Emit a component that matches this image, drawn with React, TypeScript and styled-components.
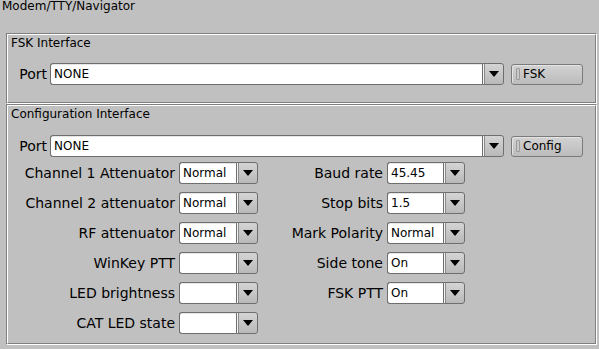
import React from 'react'
import styled, { createGlobalStyle } from 'styled-components'

const GlobalStyle = createGlobalStyle`
  html, body {
    margin: 0;
    padding: 0;
    background: #c0c0c0;
  }
  body {
    font-family: 'DejaVu Sans', 'Liberation Sans', sans-serif;
    color: #000;
  }
`

const Page = styled.div`
  width: 599px;
  height: 349px;
  box-sizing: border-box;
  padding: 0 2px 0 6px;
  background: #c0c0c0;
  overflow: hidden;
`

const Title = styled.div`
  font-size: 12px;
  line-height: 12px;
  height: 12px;
  margin-left: -4px;
`

const Group = styled.div<{ $top: number; $height: number }>`
  margin-top: ${p => p.$top}px;
  width: 591px;
  height: ${p => p.$height}px;
  box-sizing: border-box;
  border: 1px solid;
  border-color: #7f7f7f #fff #fff #7f7f7f;
`

const GroupInner = styled.div`
  height: 100%;
  box-sizing: border-box;
  border: 1px solid;
  border-color: #fff #7f7f7f #7f7f7f #fff;
  padding: 1px 0 0 0;
`

const GroupLabel = styled.div`
  font-size: 12px;
  line-height: 14px;
  padding-left: 3px;
`

const PortRow = styled.div<{ $top: number }>`
  display: grid;
  grid-template-columns: 42px 432px 22px 79px;
  align-items: center;
  margin-top: ${p => p.$top}px;
  height: 22px;
`

const PortLabel = styled.span`
  font-size: 14px;
  text-align: right;
  padding-right: 3px;
`

const TextField = styled.div`
  height: 22px;
  box-sizing: border-box;
  background: #fff;
  border: 1px solid #6e6e6e;
  border-right: none;
  border-radius: 3px 0 0 3px;
  box-shadow: inset 0 1px 0 #e6e6e6;
  font-size: 12px;
  line-height: 20px;
  padding-left: 3px;
  white-space: nowrap;
  overflow: hidden;
`

const DropButton = styled.div`
  height: 22px;
  box-sizing: border-box;
  border: 1px solid #6e6e6e;
  border-radius: 0 3px 3px 0;
  background: linear-gradient(#d4d4d4, #b9b9b9);
  box-shadow: inset 1px 0 0 #f4f4f4, inset 2px 0 0 #8a8a8a;
  display: flex;
  align-items: center;
  justify-content: center;
`

const Arrow = styled.span`
  width: 0;
  height: 0;
  border-left: 5px solid transparent;
  border-right: 5px solid transparent;
  border-top: 6px solid #000;
  margin-left: 2px;
`

const LightButton = styled.div`
  margin-left: 7px;
  height: 21px;
  box-sizing: border-box;
  border: 1px solid #7a7a7a;
  border-radius: 3px;
  background: linear-gradient(#d2d2d2, #bcbcbc);
  box-shadow: inset 1px 1px 0 #e4e4e4;
  display: flex;
  align-items: center;
  font-size: 12px;
  padding-left: 4px;
  gap: 3px;
`

const Indicator = styled.span`
  width: 4px;
  height: 12px;
  box-sizing: border-box;
  border: 1px solid #9a9a9a;
  border-radius: 1px;
  background: #c8c8c8;
`

const SettingsGrid = styled.div`
  display: grid;
  grid-template-columns: 171px 57px 22px 129px 56px 22px;
  grid-auto-rows: 22px;
  row-gap: 8px;
  margin-top: 5px;
  align-items: center;
`

const SettingLabel = styled.span`
  font-size: 14px;
  text-align: right;
  padding-right: 4px;
  white-space: nowrap;
`

const Empty = styled.span``

type Setting = { label: string; value: string }

const leftSettings: Setting[] = [
  { label: 'Channel 1 Attenuator', value: 'Normal' },
  { label: 'Channel 2 attenuator', value: 'Normal' },
  { label: 'RF attenuator', value: 'Normal' },
  { label: 'WinKey PTT', value: '' },
  { label: 'LED brightness', value: '' },
  { label: 'CAT LED state', value: '' }
]

const rightSettings: Setting[] = [
  { label: 'Baud rate', value: '45.45' },
  { label: 'Stop bits', value: '1.5' },
  { label: 'Mark Polarity', value: 'Normal' },
  { label: 'Side tone', value: 'On' },
  { label: 'FSK PTT', value: 'On' }
]

const Choice = ({ value }: { value: string }) => (
  <>
    <TextField>{value}</TextField>
    <DropButton>
      <Arrow />
    </DropButton>
  </>
)

const SettingCells = ({ setting }: { setting?: Setting }) =>
  setting ? (
    <>
      <SettingLabel>{setting.label}</SettingLabel>
      <Choice value={setting.value} />
    </>
  ) : (
    <>
      <Empty />
      <Empty />
      <Empty />
    </>
  )

const PortLine = ({ top, button }: { top: number; button: string }) => (
  <PortRow $top={top}>
    <PortLabel>Port</PortLabel>
    <Choice value="NONE" />
    <LightButton>
      <Indicator />
      {button}
    </LightButton>
  </PortRow>
)

export default function App() {
  return (
    <Page>
      <GlobalStyle />
      <Title>Modem/TTY/Navigator</Title>
      <Group $top={21} $height={71}>
        <GroupInner>
          <GroupLabel>FSK Interface</GroupLabel>
          <PortLine top={13} button="FSK" />
        </GroupInner>
      </Group>
      <Group $top={0} $height={241}>
        <GroupInner>
          <GroupLabel>Configuration Interface</GroupLabel>
          <PortLine top={14} button="Config" />
          <SettingsGrid>
            {leftSettings.map((s, i) => (
              <React.Fragment key={s.label}>
                <SettingCells setting={s} />
                <SettingCells setting={rightSettings[i]} />
              </React.Fragment>
            ))}
          </SettingsGrid>
        </GroupInner>
      </Group>
    </Page>
  )
}
